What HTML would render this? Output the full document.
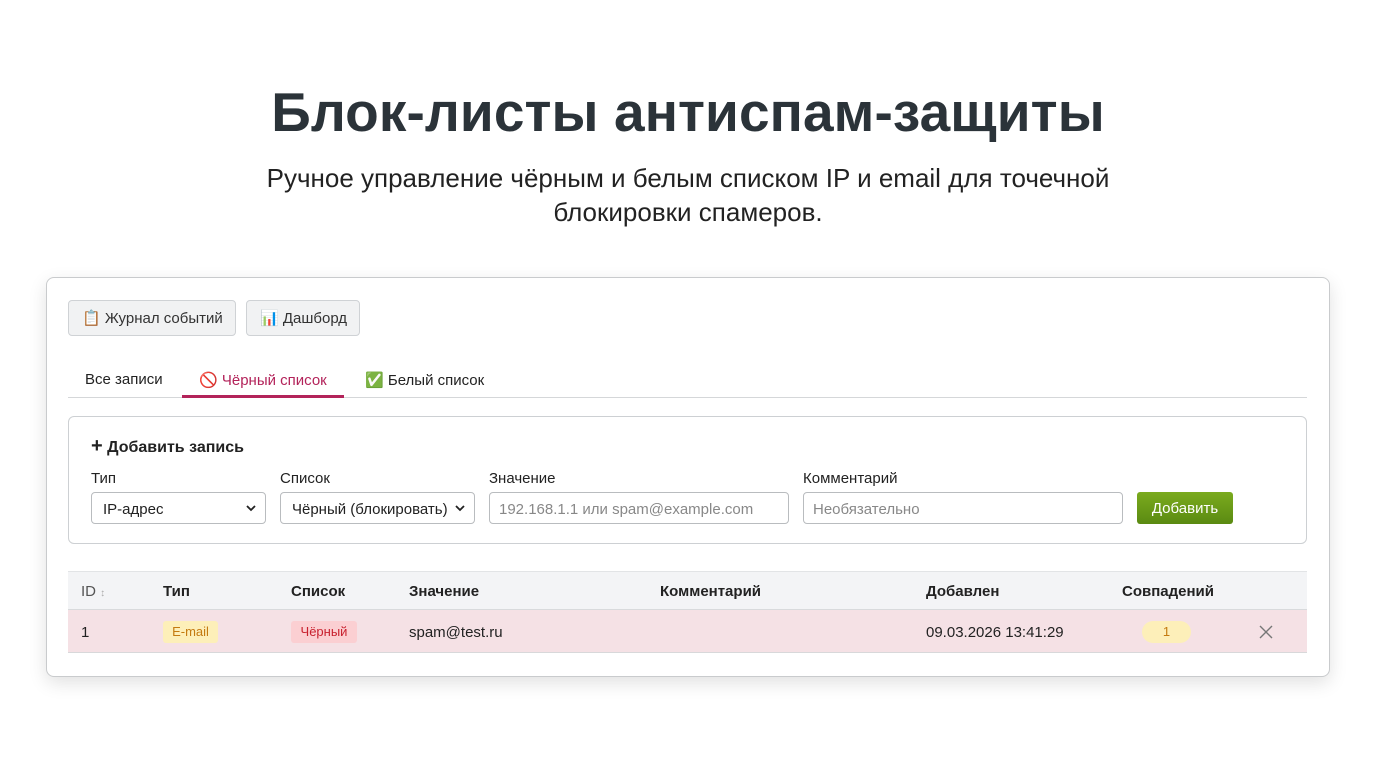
<!DOCTYPE html>
<html><head><meta charset="utf-8"><style>
*{box-sizing:border-box;margin:0;padding:0}
body{width:1376px;height:768px;background:#fff;font-family:"Liberation Sans","DejaVu Sans",sans-serif;color:#222;position:relative;overflow:hidden}
.a{position:absolute}
h1{position:absolute;left:0;width:1376px;top:80px;text-align:center;font-size:55px;font-weight:bold;color:#2b3339;letter-spacing:0.1px}
.sub{position:absolute;left:0;width:1376px;top:161px;text-align:center;font-size:26px;line-height:34px;color:#222}
.card{left:46px;top:277px;width:1284px;height:400px;border:1px solid #c9cbcd;border-radius:8px;box-shadow:0 6px 18px rgba(0,0,0,.12);background:#fff}
.btn{top:300px;height:36px;border:1px solid #cfd2d5;border-radius:4px;background:#f1f2f3;font-size:15px;line-height:36px;padding-left:13px;color:#333}
.t{font-size:15px;top:371px}
.lbl{font-size:15px;top:470px;color:#222}
.in{top:492px;height:32px;border:1px solid #b9bcbf;border-radius:4px;font-size:15px;line-height:33px;padding-left:11px;background:#fff}
.th{top:583px;font-size:15px;font-weight:bold;color:#222}
.td{top:624px;font-size:15px;color:#222}
.chev{position:absolute;right:8px;top:10px}
</style></head><body>
<h1>Блок-листы антиспам-защиты</h1>
<div class="sub">Ручное управление чёрным и белым списком IP и email для точечной<br>блокировки спамеров.</div>
<div class="a card"></div>
<div class="a btn" style="left:68px;width:168px">📋 Журнал событий</div>
<div class="a btn" style="left:246px;width:114px">📊 Дашборд</div>
<div class="a t" style="left:85px">Все записи</div>
<div class="a t" style="left:199px;color:#b3235a"><span style="color:#d22">🚫</span> Чёрный список</div>
<div class="a t" style="left:365px">✅ Белый список</div>
<div class="a" style="left:68px;top:397px;width:1239px;height:1px;background:#d5d7d9"></div>
<div class="a" style="left:182px;top:395px;width:162px;height:3px;background:#b3235a"></div>
<div class="a" style="left:68px;top:416px;width:1239px;height:128px;border:1px solid #cdd0d3;border-radius:6px"></div>
<div class="a" style="left:91px;top:438px;font-size:16px;font-weight:bold"><span style="font-size:20px;line-height:16px">+</span> Добавить запись</div>
<div class="a lbl" style="left:91px">Тип</div>
<div class="a lbl" style="left:280px">Список</div>
<div class="a lbl" style="left:489px">Значение</div>
<div class="a lbl" style="left:803px">Комментарий</div>
<div class="a in" style="left:91px;width:175px">IP-адрес<svg class="chev" width="12" height="10" viewBox="0 0 12 10"><path d="M2 3l4 4 4-4" stroke="#222" stroke-width="1.8" fill="none"/></svg></div>
<div class="a in" style="left:280px;width:195px">Чёрный (блокировать)<svg class="chev" width="12" height="10" viewBox="0 0 12 10"><path d="M2 3l4 4 4-4" stroke="#222" stroke-width="1.8" fill="none"/></svg></div>
<div class="a in" style="left:489px;width:300px;color:#888;padding-left:9px">192.168.1.1 или spam@example.com</div>
<div class="a in" style="left:803px;width:320px;color:#888;padding-left:9px">Необязательно</div>
<div class="a" style="left:1137px;top:492px;width:96px;height:32px;border-radius:3px;background:linear-gradient(#7bab1e,#5a8a12);color:#fff;font-size:15px;line-height:33px;text-align:center">Добавить</div>
<div class="a" style="left:68px;top:571px;width:1239px;height:39px;background:#f3f4f6;border-top:1px solid #e2e4e6;border-bottom:1px solid #d8dadc"></div>
<div class="a" style="left:68px;top:610px;width:1239px;height:43px;background:#f5e1e5;border-bottom:1px solid #d8d8da"></div>
<div class="a th" style="left:81px;font-weight:normal;color:#555">ID <span style="font-size:10px;color:#aaa">↕</span></div>
<div class="a th" style="left:163px">Тип</div>
<div class="a th" style="left:291px">Список</div>
<div class="a th" style="left:409px">Значение</div>
<div class="a th" style="left:660px">Комментарий</div>
<div class="a th" style="left:926px">Добавлен</div>
<div class="a th" style="left:1122px">Совпадений</div>
<div class="a td" style="left:81px">1</div>
<div class="a" style="left:163px;top:621px;width:55px;height:22px;background:#fdefb9;border-radius:3px;color:#c47a10;font-size:13px;line-height:22px;text-align:center">E-mail</div>
<div class="a" style="left:291px;top:621px;width:66px;height:22px;background:#fbcfd2;border-radius:3px;color:#c8202e;font-size:13px;line-height:22px;text-align:center">Чёрный</div>
<div class="a td" style="left:409px">spam@test.ru</div>
<div class="a td" style="left:926px">09.03.2026 13:41:29</div>
<div class="a" style="left:1142px;top:621px;width:49px;height:22px;background:#fdefb9;border-radius:11px;color:#c47a10;font-size:13px;line-height:22px;text-align:center">1</div>
<svg class="a" style="left:1259px;top:625px" width="14" height="14" viewBox="0 0 14 14"><path d="M1 1l12 12M13 1L1 13" stroke="#777" stroke-width="1.4"/></svg>
</body></html>
